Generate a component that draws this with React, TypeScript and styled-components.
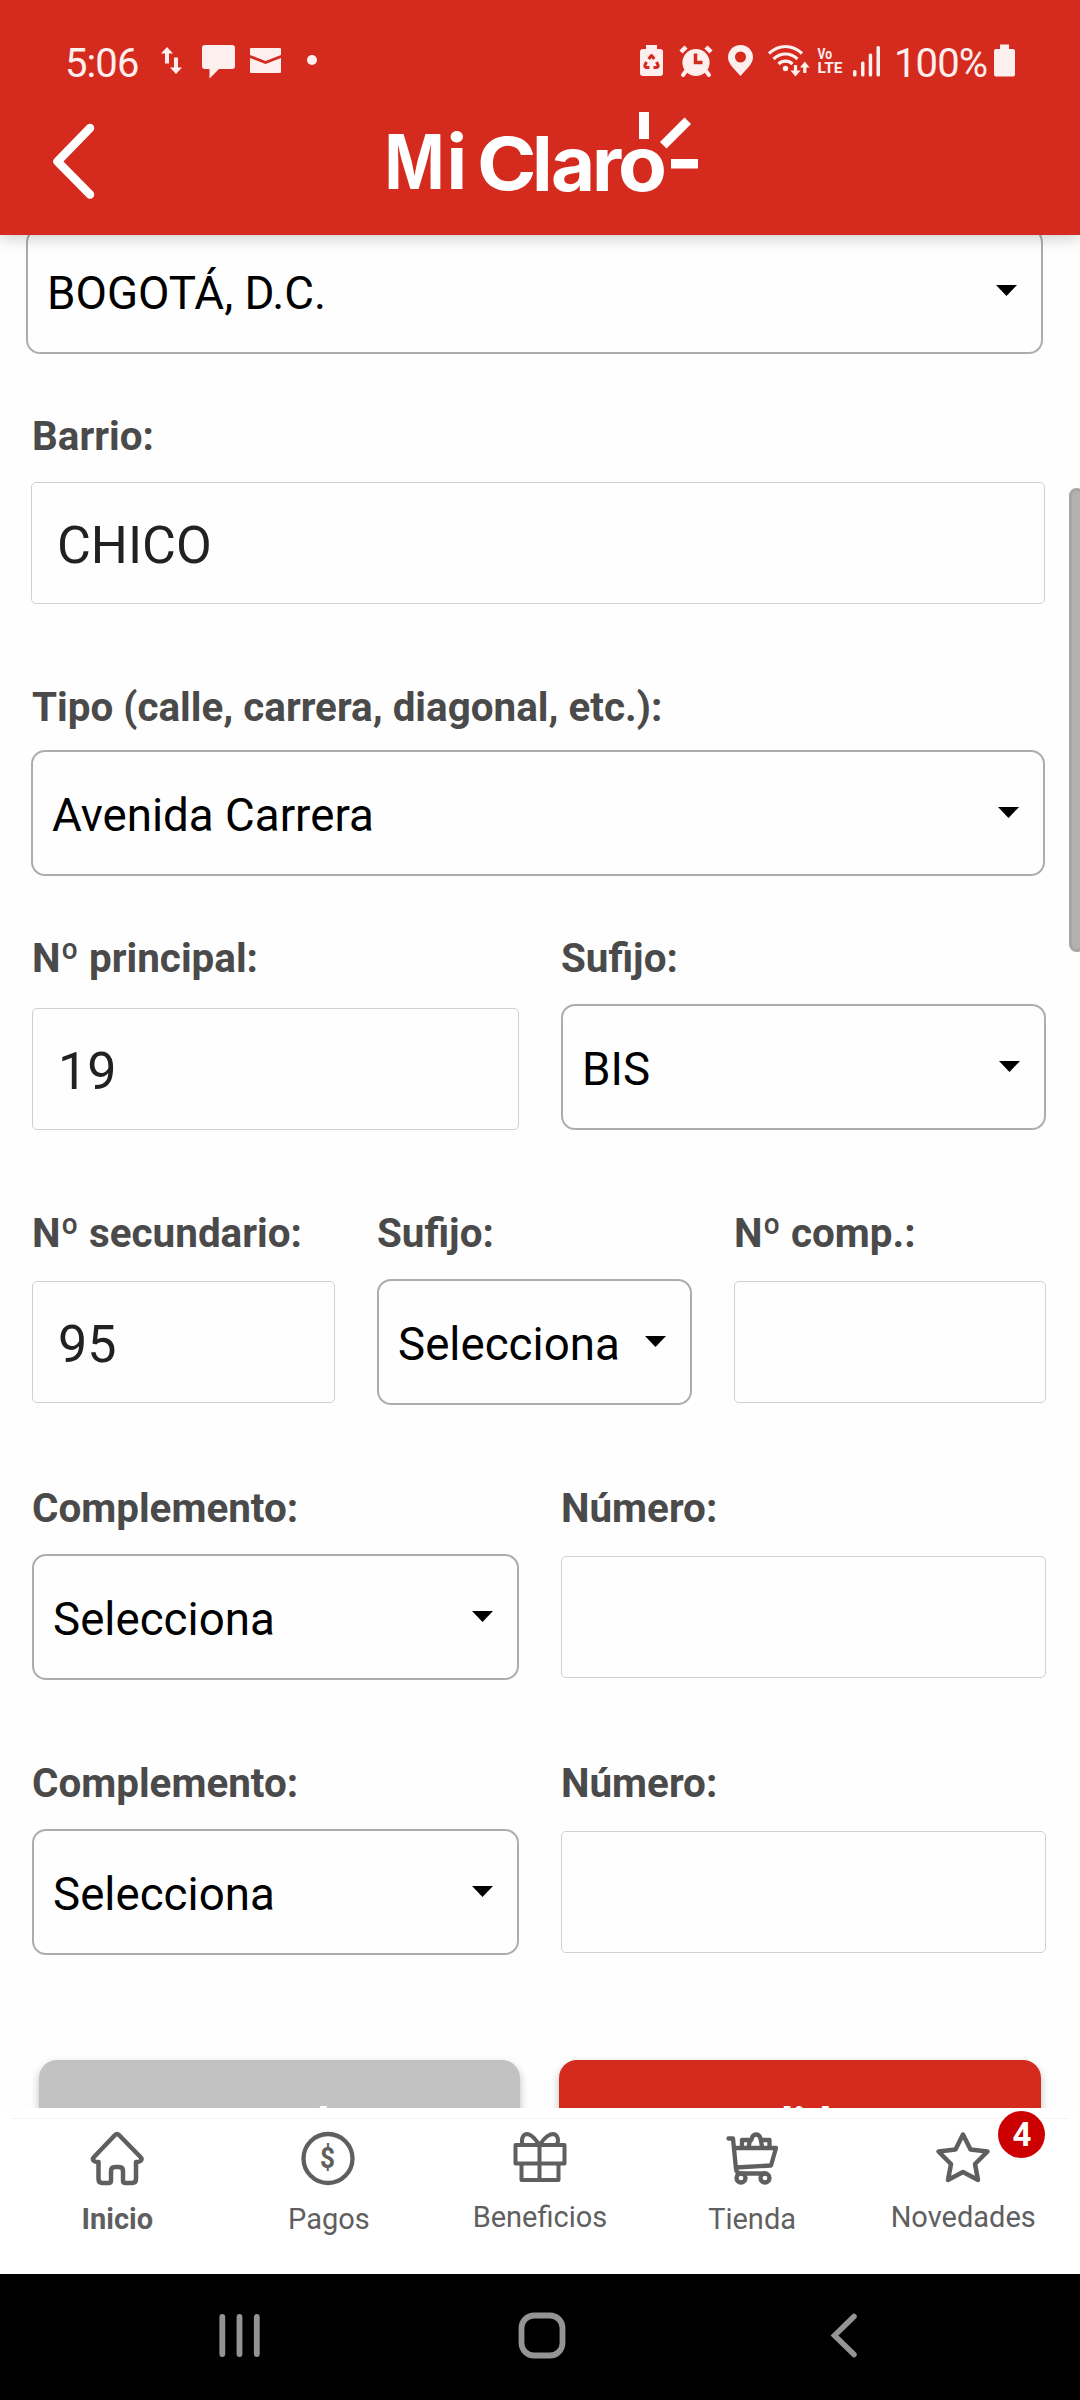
import React from "react";
import styled, { createGlobalStyle } from "styled-components";

const RED = "#d52b1e";
const GREY = "#5f5f5f";
const STATUS = "#fcefee";

const Global = createGlobalStyle`
  * { box-sizing: border-box; }
  body { margin: 0; background: #fefefe; font-family: Roboto, "Noto Sans", sans-serif; }
  svg { display: block; flex: none; overflow: visible; }
`;

const Screen = styled.div`
  width: 1080px;
  height: 2400px;
  display: flex;
  flex-direction: column;
  overflow: hidden;
`;

/* ---------- header ---------- */
const Header = styled.header`
  flex: none;
  height: 235px;
  background: ${RED};
  box-shadow: 0 2px 16px rgba(0, 0, 0, 0.22);
  z-index: 2;
`;
const StatusBar = styled.div`
  height: 110px;
  padding: 38px 65px 0 65px;
  display: flex;
  justify-content: space-between;
  color: ${STATUS};
`;
const StatusGroup = styled.div`
  display: flex;
  height: 48px;
`;
const StatusText = styled.span<{ $w: number }>`
  width: ${(p) => p.$w}px;
  font-size: 40px;
  line-height: 51px;
  letter-spacing: -0.9px;
  white-space: nowrap;
`;
const TitleBar = styled.div`
  height: 125px;
  padding: 0 382px 0 48px;
  display: flex;
  justify-content: space-between;
`;

/* ---------- form ---------- */
const Content = styled.main`
  flex: none;
  height: 1873px;
  overflow: hidden;
  position: relative;
  padding: 0 34px 0 32px;
`;
const Form = styled.div`
  display: flex;
  flex-direction: column;
  margin-top: -7px;
`;
const Label = styled.div`
  height: 48px;
  font-size: 40.4px;
  line-height: 50px;
  font-weight: 700;
  color: #4a4a4a;
  white-space: nowrap;
`;
const Row = styled.div<{ $gap?: number; $cols?: string; $wide?: boolean }>`
  display: grid;
  grid-template-columns: ${(p) => p.$cols || "1fr"};
  column-gap: 42px;
  align-items: start;
  margin-top: ${(p) => p.$gap || 0}px;
  margin-left: ${(p) => (p.$wide ? -1 : 0)}px;
  margin-right: ${(p) => (p.$wide ? 1 : 0)}px;

  ${Label} {
    padding-left: ${(p) => (p.$wide ? 1 : 0)}px;
  }
`;
const FirstRow = styled(Row)`
  margin-left: -6px;
  margin-right: 3px;
`;
const InputBox = styled.div<{ $top: number }>`
  margin-top: ${(p) => p.$top}px;
  height: 122px;
  padding: 5px 0 0 25px;
  border: 1px solid #d0d0d0;
  border-radius: 5px;
  font-size: 52px;
  line-height: 116px;
  color: #212121;
`;
const SelectBox = styled.div<{ $top: number }>`
  margin-top: ${(p) => p.$top}px;
  height: 126px;
  padding: 0 24px 0 19px;
  border: 2px solid #adadad;
  border-radius: 14px;
  display: flex;
  justify-content: space-between;
  font-size: 45.7px;
  line-height: 128px;
  color: #000;
  white-space: nowrap;
`;
const Arrow = styled.span`
  margin-top: 55px;
  width: 21px;
  height: 11px;
  background: #000;
  clip-path: polygon(0 0, 100% 0, 50% 100%);
`;
const Buttons = styled.div`
  display: grid;
  grid-template-columns: 481px 482px;
  column-gap: 39px;
  margin: 105px 0 0 7px;
`;
const Button = styled.div<{ $bg: string }>`
  height: 120px;
  border-radius: 18px;
  background: ${(p) => p.$bg};
  box-shadow: 0 4px 8px rgba(0, 0, 0, 0.25);
  color: #fff;
  text-align: center;
  font-size: 46px;
  font-weight: 700;
  line-height: 130px;
`;
const ScrollThumb = styled.div`
  position: absolute;
  right: -4px;
  top: 253px;
  width: 15px;
  height: 464px;
  border: 3px solid #a5a5a5;
  border-radius: 12px;
  background: #b1b1b1;
`;

/* ---------- bottom navigation ---------- */
const Nav = styled.nav`
  flex: none;
  height: 166px;
  padding: 10px 11px 0;
  background: #fff;
`;
const Tabs = styled.div`
  display: grid;
  grid-template-columns: repeat(5, 1fr);
  border-top: 1px solid #f4f4f4;
`;
const Tab = styled.div`
  position: relative;
  padding-top: 11px;
  display: flex;
  flex-direction: column;
  align-items: center;
`;
const TabLabel = styled.span<{ $bold?: boolean; $raise?: boolean }>`
  margin-top: ${(p) => (p.$raise ? 13 : 15)}px;
  padding-left: ${(p) => (p.$raise ? 0 : 1)}px;
  font-size: 29px;
  line-height: 36px;
  font-weight: ${(p) => (p.$bold ? 700 : 400)};
  color: ${GREY};
`;
const Badge = styled.span`
  position: absolute;
  left: 141px;
  top: -8px;
  width: 47px;
  height: 47px;
  border-radius: 50%;
  background: #cc0000;
  box-shadow: 0 0 0 3px #fff;
  color: #fff;
  font-size: 33px;
  line-height: 48px;
  font-weight: 700;
  text-align: center;
`;
const SystemBar = styled.div`
  flex: none;
  height: 126px;
  padding: 0 222px 0 219px;
  background: #000;
  display: flex;
  justify-content: space-between;
`;

/* Every drawing keeps the coordinates of the screen; its box is the viewBox. */
const Drawing = styled.svg<{ $ml: number }>`
  margin-left: ${(p) => p.$ml}px;
`;
const Pic = ({ box, ml = 0, children }: { box: number[]; ml?: number; children?: React.ReactNode }) => (
  <Drawing
    $ml={ml}
    width={box[2]}
    height={box[3]}
    viewBox={box.join(" ")}
    fill="none"
    strokeLinecap="round"
    strokeLinejoin="round"
  >
    {children}
  </Drawing>
);

const LeftStatus = () => (
  <Pic box={[161, 38, 157, 48]}>
    <g fill={STATUS}>
      <path d="M167 47l6 6.500h-4v10h-4v-10h-4z" />
      <path d="M176 74l6-6.500h-4v-10h-4v10h-4z" />
      <path d="M205 45h27q3 0 3 3v18q0 3-3 3h-13l-9.500 9.500V69H205q-3 0-3-3V48q0-3 3-3z" />
      <path d="M251 48h29q1 0 1 1v6l-15.500 6L250 55v-6q0-1 1-1zM250 58l15.500 6L281 58v14q0 1-1 1h-29q-1 0-1-1z" />
      <circle cx="312" cy="60" r="5" />
    </g>
  </Pic>
);

const RightStatus = () => (
  <Pic box={[640, 38, 254, 48]}>
    <g fill={STATUS}>
      <path d="M646 45h11v4h3q3 0 3 3v21q0 3-3 3h-17q-3 0-3-3V52q0-3 3-3h3z" />
      <path d="M648.700 59l2.800-3.500 2.800 3.500M656.500 62l1.500 3q.8 2.500-2 2.500h-2.500M649.500 67.500H647q-2.800 0-2-2.500l1.500-3" stroke={RED} strokeWidth="3" fill="none" strokeLinecap="butt" />
      <circle cx="696" cy="62.500" r="13.600" />
      <path d="M686 71l-3 4M706 71l3 4" stroke={STATUS} strokeWidth="4" />
      <path d="M681 52l5-5M711 52l-5-5" stroke={STATUS} strokeWidth="4.500" strokeLinecap="butt" />
      <path d="M695.500 53.500v9h7" stroke={RED} strokeWidth="3.500" fill="none" strokeLinecap="butt" strokeLinejoin="miter" />
      <path fillRule="evenodd" d="M740.500 45c7 0 12.500 5.500 12.500 12.300 0 7.200-7.500 12.700-12.500 18.700-5-6-12.500-11.500-12.500-18.700C728 50.500 733.500 45 740.500 45zm0 6.500a5.500 5.500 0 1 0 0 11 5.500 5.500 0 0 0 0-11z" />
      <circle cx="785.500" cy="68.500" r="2.700" />
      <g stroke={STATUS} strokeWidth="3.200" fill="none" strokeLinecap="butt">
        <path d="M769 53.500q7.500-7 16.500-7t16.500 7M773.500 59q5.500-5 12-5t12 5M778.500 64q3-2.800 7-2.800t7 2.800" />
        <path d="M795.500 65v8M804.800 73v-8" />
      </g>
      <path d="M790.500 70.500l5 6 5-6zM800 67.500l4.800-6 4.800 6z" />
      <text x="817.500" y="59" fontSize="15.500" fontWeight="700" textLength="14.500" lengthAdjust="spacingAndGlyphs">Vo</text>
      <text x="817.500" y="73" fontSize="15.500" fontWeight="700" textLength="25" lengthAdjust="spacingAndGlyphs">LTE</text>
      <rect x="853" y="70" width="3.500" height="6.500" rx="1.500" />
      <rect x="861" y="61.500" width="3.500" height="15" rx="1.500" />
      <rect x="868.700" y="53.500" width="3.500" height="23" rx="1.500" />
      <rect x="876.500" y="46" width="3.500" height="30.500" rx="1.500" />
    </g>
  </Pic>
);

const Logo = () => (
  <Pic box={[388, 110, 310, 90]}>
    <g fill="#fff" fontFamily="Inter, sans-serif" fontWeight="700" fontSize="76">
      <text x="384.500" y="189" textLength="60" lengthAdjust="spacingAndGlyphs">M</text>
      <text x="446.500" y="189">i</text>
      <text x="477" y="190" fontSize="73" textLength="59.500" lengthAdjust="spacingAndGlyphs">C</text>
      <text x="532" y="190.500">l</text>
      <text x="551" y="190.500">a</text>
      <text x="592" y="190.500">r</text>
      <text x="618" y="190.500" textLength="49" lengthAdjust="spacingAndGlyphs">o</text>
      <rect x="639" y="112" width="10" height="27" />
      <rect x="671" y="159" width="27" height="9.500" />
      <path d="M684.500 117.500l6.500 6.500-24.500 24.500-6.500-6.500z" />
    </g>
  </Pic>
);

const HomeIcon = () => (
  <Pic box={[89.5, 2130, 54, 56]}>
    <path
      stroke={GREY}
      strokeWidth="4.500"
      d="M114.500 2135q2-2 4 0l21.500 22q2 2 0 4-1 1-4.500 1V2179q0 4-4 4h-6.500q-2.500 0-2.500-2.500V2171q0-4-4-4h-4q-4 0-4 4v9.500q0 2.500-2.500 2.500H102q-4 0-4-4V2162q-3.500 0-4.500-1-2-2 0-4z"
    />
  </Pic>
);
const PayIcon = () => (
  <Pic box={[301.5, 2130, 54, 56]}>
    <circle cx="328.500" cy="2158.500" r="24.500" stroke={GREY} strokeWidth="4.300" />
    <text x="328" y="2168" textAnchor="middle" fontSize="30" fontWeight="700" fill={GREY} textLength="15" lengthAdjust="spacingAndGlyphs">$</text>
  </Pic>
);
const GiftIcon = () => (
  <Pic box={[512.5, 2130, 54, 56]}>
    <path
      stroke={GREY}
      strokeWidth="4"
      d="M515 2145h49v18.500h-49zM521 2163.500h37v16.500h-37zM539 2145v35M539 2145c-2-2-6-11-13-11q-4.500 1-4.500 7v4M539 2145c2-2 6-11 14-11q4.500 1 4.500 7l-1 4"
    />
  </Pic>
);
const CartIcon = () => (
  <Pic box={[724.5, 2130, 54, 56]}>
    <g stroke={GREY} strokeWidth="4.300">
      <path d="M728 2138.500h4.500l3 30.500q.5 4.500 5 4.500h24.500M733.500 2148H775.500l-5 17.500-35 2" />
      <path d="M741.500 2147v-7h6.500M748.500 2147q-.5-5 2.500-7.500 1-5 4.500-5t4.500 4q.5 2 1.500 8M762 2140h7v7" />
      <circle cx="740.500" cy="2178" r="4.500" />
      <circle cx="764.500" cy="2178" r="4.500" />
    </g>
  </Pic>
);
const StarIcon = () => (
  <Pic box={[935.5, 2130, 54, 56]}>
    <path
      stroke={GREY}
      strokeWidth="4.500"
      d="M962.500 2134.500l7.500 15 17 2-12.500 12.500 3 16-15-8-15 8 3-16-12.500-12.500 17-2z"
    />
  </Pic>
);

const Input = ({ label, value, top }: { label: string; value?: string; top: number }) => (
  <div>
    <Label>{label}</Label>
    <InputBox $top={top}>{value}</InputBox>
  </div>
);
const Select = ({ label, value, top = 22 }: { label?: string; value: string; top?: number }) => (
  <div>
    {label && <Label>{label}</Label>}
    <SelectBox $top={top}>
      <span>{value}</span>
      <Arrow />
    </SelectBox>
  </div>
);

export default function App() {
  return (
    <Screen>
      <Global />
      <Header>
        <StatusBar>
          <StatusGroup>
            <StatusText $w={96}>5:06</StatusText>
            <LeftStatus />
          </StatusGroup>
          <StatusGroup>
            <RightStatus />
            <StatusText $w={100}>100%</StatusText>
            <Pic box={[994, 38, 21, 48]}>
              <path fill={STATUS} d="M1000 44.500h9v4.500h4q2 0 2 2v23.500q0 2-2 2h-17q-2 0-2-2V51q0-2 2-2h4z" />
            </Pic>
          </StatusGroup>
        </StatusBar>
        <TitleBar>
          <Pic box={[48, 110, 60, 100]}>
            <path d="M90 128L57.500 161.500 90 194.500" stroke="#fff" strokeWidth="8.500" />
          </Pic>
          <Logo />
        </TitleBar>
      </Header>

      <Content>
        <Form>
          <FirstRow>
            <Select value="BOGOTÁ, D.C." top={0} />
          </FirstRow>
          <Row $gap={58} $wide>
            <Input label="Barrio:" value="CHICO" top={22} />
          </Row>
          <Row $gap={79} $wide>
            <Select label="Tipo (calle, carrera, diagonal, etc.):" value="Avenida Carrera" top={19} />
          </Row>
          <Row $gap={58} $cols="487px 1fr">
            <Input label="Nº principal:" value="19" top={26} />
            <Select label="Sufijo:" value="BIS" />
          </Row>
          <Row $gap={79} $cols="303px 315px 1fr">
            <Input label="Nº secundario:" value="95" top={24} />
            <Select label="Sufijo:" value="Selecciona" />
            <Input label="Nº comp.:" top={24} />
          </Row>
          <Row $gap={79} $cols="487px 1fr">
            <Select label="Complemento:" value="Selecciona" />
            <Input label="Número:" top={24} />
          </Row>
          <Row $gap={79} $cols="487px 1fr">
            <Select label="Complemento:" value="Selecciona" />
            <Input label="Número:" top={24} />
          </Row>
          <Buttons>
            <Button $bg="#c2c2c2">Cancelar</Button>
            <Button $bg={RED}>Validar</Button>
          </Buttons>
        </Form>
        <ScrollThumb />
      </Content>

      <Nav>
        <Tabs>
          <Tab>
            <HomeIcon />
            <TabLabel $bold>Inicio</TabLabel>
          </Tab>
          <Tab>
            <PayIcon />
            <TabLabel>Pagos</TabLabel>
          </Tab>
          <Tab>
            <GiftIcon />
            <TabLabel $raise>Beneficios</TabLabel>
          </Tab>
          <Tab>
            <CartIcon />
            <TabLabel>Tienda</TabLabel>
          </Tab>
          <Tab>
            <StarIcon />
            <TabLabel $raise>Novedades</TabLabel>
            <Badge>4</Badge>
          </Tab>
        </Tabs>
      </Nav>

      <SystemBar>
        <Pic box={[219, 2274, 42, 126]}>
          <path d="M222.300 2317v37M239.500 2317v37M256.800 2317v37" stroke="#949494" strokeWidth="5.800" />
        </Pic>
        <Pic box={[518, 2274, 48, 126]} ml={-8}>
          <rect x="521.500" y="2315.500" width="41" height="40" rx="12.500" stroke="#949494" strokeWidth="5.800" />
        </Pic>
        <Pic box={[831, 2274, 27, 126]}>
          <path d="M854 2316.500L834.500 2335.500 854 2354.500" stroke="#949494" strokeWidth="5.500" strokeLinejoin="miter" />
        </Pic>
      </SystemBar>
    </Screen>
  );
}
